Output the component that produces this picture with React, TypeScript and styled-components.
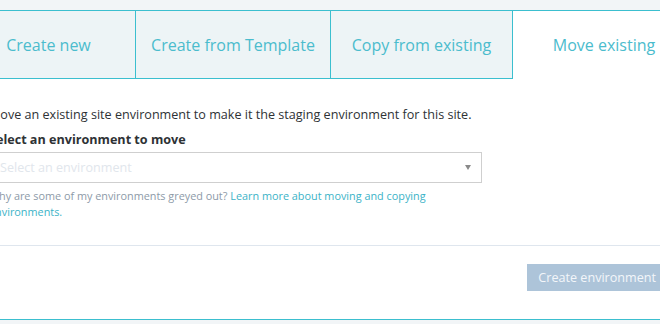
import React from 'react';
import styled, { createGlobalStyle } from 'styled-components';

const GlobalStyle = createGlobalStyle`
  body {
    margin: 0;
    background: #f2f5f7;
    font-family: "Open Sans", "Liberation Sans", sans-serif;
    overflow: hidden;
  }
`;

const Page = styled.div`
  padding-top: 10px;
  margin-left: -39px;
  width: 735px;
`;

const Panel = styled.div`
  background: #ffffff;
  border: 1px solid #3bbfcf;
  display: flex;
  flex-direction: column;
`;

const TabBar = styled.div`
  display: flex;
  height: 68px;
`;

const Tab = styled.div<{ $active?: boolean; $width?: number }>`
  box-sizing: border-box;
  display: flex;
  align-items: center;
  justify-content: center;
  width: ${(p) => (p.$width ? `${p.$width}px` : 'auto')};
  flex: ${(p) => (p.$width ? '0 0 auto' : '1')};
  background: ${(p) => (p.$active ? '#ffffff' : '#edf4f6')};
  border-bottom: ${(p) => (p.$active ? 'none' : '1px solid #3bbfcf')};
  border-right: ${(p) => (p.$active ? 'none' : '1px solid #3bbfcf')};
  color: #4bbccd;
  font-size: 16px;
  white-space: nowrap;
`;

const Body = styled.div`
  padding: 26px 27px 25px 27px;
  display: flex;
  flex-direction: column;
  color: #2e3235;
  font-size: 12.6px;
`;

const Intro = styled.p`
  margin: 0;
  line-height: 20px;
`;

const Label = styled.div`
  margin-top: 5px;
  font-weight: 700;
  line-height: 20px;
`;

const SelectBox = styled.div`
  box-sizing: border-box;
  margin-top: 2px;
  width: 493px;
  height: 31px;
  border: 1px solid #cfcfcf;
  display: flex;
  align-items: center;
  justify-content: space-between;
  padding: 0 10px 0 10px;
  color: #e1e6ec;
`;

const Caret = styled.span`
  width: 0;
  height: 0;
  border-left: 3px solid transparent;
  border-right: 3px solid transparent;
  border-top: 5px solid #8a8a8a;
`;

const Help = styled.p`
  margin: 5px 0 0;
  width: 460px;
  font-size: 10.85px;
  line-height: 16px;
  color: #8d9aa8;
`;

const HelpLink = styled.a`
  color: #3bb3c7;
  text-decoration: none;
`;

const Footer = styled.div`
  border-top: 1px solid #dfe6ee;
  display: flex;
  justify-content: flex-end;
  padding: 18px 28px 28px;
`;

const Button = styled.button`
  height: 27px;
  padding: 0 11px;
  border: none;
  background: #adc4d9;
  color: #f3f6fa;
  font-family: inherit;
  font-size: 12.6px;
`;

export default function App() {
  return (
    <>
      <GlobalStyle />
      <Page>
        <Panel>
          <TabBar>
            <Tab $width={174}>Create new</Tab>
            <Tab $width={195}>Create from Template</Tab>
            <Tab $width={182}>Copy from existing</Tab>
            <Tab $active>Move existing</Tab>
          </TabBar>
          <Body>
            <Intro>Move an existing site environment to make it the staging environment for this site.</Intro>
            <Label>Select an environment to move</Label>
            <SelectBox>
              <span>Select an environment</span>
              <Caret />
            </SelectBox>
            <Help>
              Why are some of my environments greyed out?{' '}
              <HelpLink href="#">Learn more about moving and copying environments.</HelpLink>
            </Help>
          </Body>
          <Footer>
            <Button>Create environment</Button>
          </Footer>
        </Panel>
      </Page>
    </>
  );
}
